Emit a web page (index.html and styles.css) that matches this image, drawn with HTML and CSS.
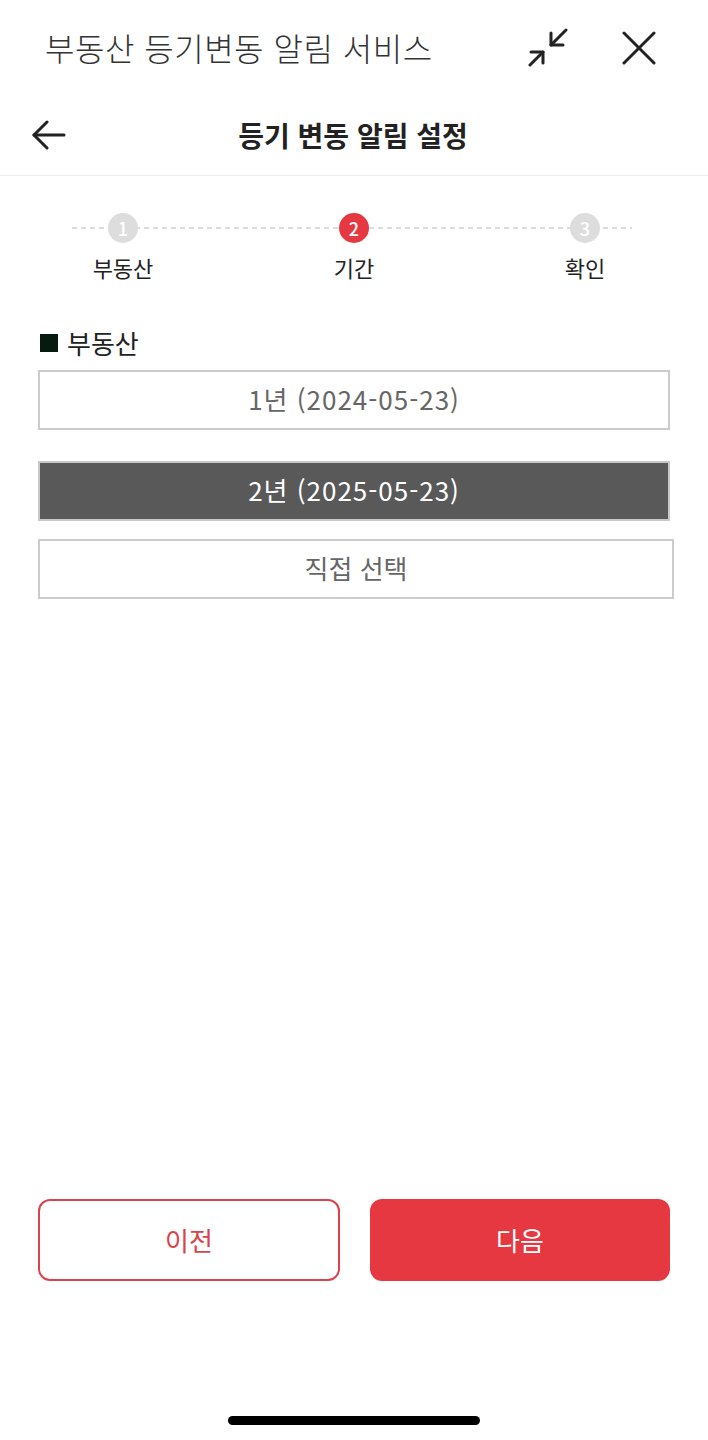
FILE: index.html
```html
<!DOCTYPE html>
<html lang="ko">
<head>
    <meta charset="UTF-8">
    <meta name="viewport" content="width=708">
    <title>부동산 등기변동 알림 서비스</title>
    <link rel="stylesheet" href="styles.css">
</head>
<body>
    <div class="page">
        <header class="topbar">
            <div class="topbar-title">부동산 등기변동 알림 서비스</div>
            <div class="topbar-icons">
                <svg class="icon-min" width="40" height="40" viewBox="0 0 40 40" fill="none" stroke="#222" stroke-width="3" stroke-linecap="round" stroke-linejoin="round">
                    <path d="M2 38 L15 25"/>
                    <path d="M3 25 H15 V36"/>
                    <path d="M38 3 L23 18"/>
                    <path d="M23 6 V18 H35"/>
                </svg>
                <svg class="icon-close" width="34" height="34" viewBox="0 0 34 34" fill="none" stroke="#222" stroke-width="3" stroke-linecap="round">
                    <path d="M2 2 L32 32"/>
                    <path d="M32 2 L2 32"/>
                </svg>
            </div>
        </header>

        <nav class="navbar">
            <svg class="back" width="34" height="30" viewBox="0 0 34 30" fill="none" stroke="#222" stroke-width="3" stroke-linecap="round" stroke-linejoin="round">
                <path d="M2 15 H32"/>
                <path d="M15 2 L2 15 L15 28"/>
            </svg>
            <h1 class="nav-title">등기 변동 알림 설정</h1>
        </nav>

        <div class="stepper">
            <div class="stepper-line"></div>
            <div class="step">
                <span class="step-dot">1</span>
                <span class="step-label">부동산</span>
            </div>
            <div class="step active">
                <span class="step-dot">2</span>
                <span class="step-label">기간</span>
            </div>
            <div class="step">
                <span class="step-dot">3</span>
                <span class="step-label">확인</span>
            </div>
        </div>

        <section class="period">
            <div class="section-title"><span class="square"></span>부동산</div>
            <button class="option">1년 (2024-05-23)</button>
            <button class="option selected">2년 (2025-05-23)</button>
            <button class="option custom">직접 선택</button>
        </section>

        <div class="actions">
            <button class="btn-prev">이전</button>
            <button class="btn-next">다음</button>
        </div>

        <div class="home-bar"></div>
    </div>
</body>
</html>
```

FILE: styles.css
```css
* {
    box-sizing: border-box;
}
body {
    margin: 0;
    font-family: "Noto Sans CJK KR", "Noto Sans", sans-serif;
    background-color: #fff;
    color: #222;
}
.page {
    display: flex;
    flex-direction: column;
    min-height: 100vh;
}
.topbar {
    height: 95px;
    display: flex;
    align-items: center;
    justify-content: space-between;
    padding: 0 52px 0 45px;
}
.topbar-title {
    font-size: 32px;
    font-weight: 300;
    letter-spacing: 0.5px;
    color: #333;
    margin-top: -2px;
}
.topbar-icons {
    display: flex;
    align-items: center;
    gap: 54px;
}
.icon-min {
    margin-top: -1px;
}
.navbar {
    height: 81px;
    border-bottom: 1px solid #eeeeee;
    display: flex;
    align-items: center;
    justify-content: center;
    position: relative;
}
.back {
    position: absolute;
    left: 32px;
    top: 25px;
}
.nav-title {
    margin: 0 0 0 -2px;
    font-size: 28px;
    font-weight: 700;
    color: #222;
}
.stepper {
    position: relative;
    display: grid;
    grid-template-columns: repeat(3, 231px);
    justify-content: center;
    margin-top: 37px;
}
.stepper-line {
    position: absolute;
    left: 72px;
    right: 76px;
    top: 14px;
    height: 2px;
    background: repeating-linear-gradient(to right, #dcdcdc 0 5px, transparent 5px 9px);
}
.step {
    display: flex;
    flex-direction: column;
    align-items: center;
    position: relative;
}
.step-dot {
    width: 30px;
    height: 30px;
    border-radius: 50%;
    background-color: #dddddd;
    color: #fff;
    font-size: 18px;
    font-weight: 500;
    line-height: 30px;
    text-align: center;
}
.step.active .step-dot {
    background-color: #e63840;
}
.step-label {
    margin-top: 10px;
    font-size: 22px;
    line-height: 28px;
    color: #222;
}
.period {
    padding: 0 34px 0 38px;
    display: flex;
    flex-direction: column;
    align-items: flex-start;
}
.section-title {
    margin-top: 47px;
    display: flex;
    align-items: center;
    gap: 9px;
    font-size: 26px;
    line-height: 30px;
    color: #222;
    padding-left: 2px;
}
.square {
    width: 18px;
    height: 18px;
    background-color: #061a10;
}
.option {
    width: 632px;
    height: 60px;
    border: 2px solid #cccccc;
    background-color: #fff;
    color: #666;
    font-family: inherit;
    font-size: 26px;
    font-weight: 400;
    letter-spacing: 1px;
    padding: 0 0 3px;
    margin-top: 12px;
}
.option.selected {
    margin-top: 31px;
    background-color: #595959;
    border-color: #c8c8c8;
    color: #fff;
}
.option.custom {
    width: 636px;
    margin-top: 18px;
    letter-spacing: 0;
}
.actions {
    margin-top: auto;
    display: flex;
    gap: 30px;
    padding: 0 38px;
}
.actions button {
    height: 82px;
    border-radius: 12px;
    font-family: inherit;
    font-size: 26px;
    padding: 0 0 2px;
}
.btn-prev {
    width: 302px;
    border: 2px solid #d9434c;
    background-color: #fff;
    color: #d9434c;
}
.btn-next {
    width: 300px;
    border: none;
    background-color: #e63840;
    color: #fff;
}
.home-bar {
    width: 252px;
    height: 9px;
    border-radius: 5px;
    background-color: #000;
    margin: 135px auto 15px;
}
```
